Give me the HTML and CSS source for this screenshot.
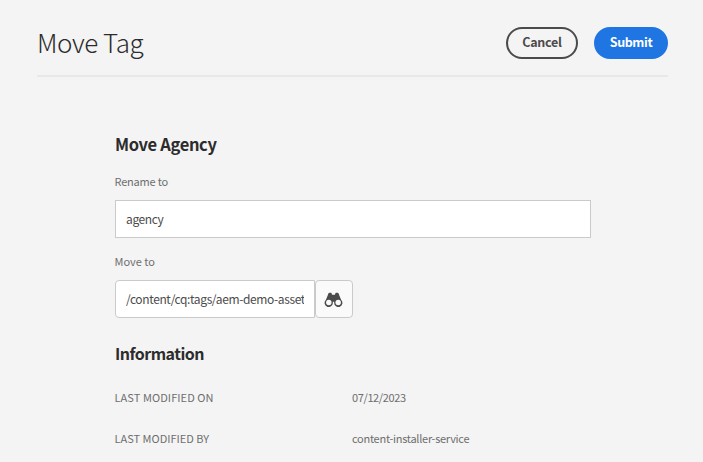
FILE: index.html
```html
<!DOCTYPE html>
<html lang="en">
<head>
<meta charset="utf-8">
<title>Move Tag</title>
<link rel="stylesheet" href="styles.css">
</head>
<body>
<header class="header">
  <h1 class="title"><span>Move Tag</span></h1>
  <div class="actions">
    <button class="btn btn-cancel" type="button"><span>Cancel</span></button>
    <button class="btn btn-submit" type="button"><span>Submit</span></button>
  </div>
</header>
<main class="content">
  <h2 class="heading heading-move"><span>Move Agency</span></h2>
  <div class="label label-rename"><span>Rename to</span></div>
  <div class="input"><span class="value value-name">agency</span></div>
  <div class="label label-move"><span>Move to</span></div>
  <div class="picker">
    <div class="input input-path"><span class="value value-path">/content/cq:tags/aem-demo-asset</span></div>
    <button class="browse" type="button" aria-label="Browse">
      <svg width="19" height="15" viewBox="0 0 20 16">
        <path fill="#4b4b4b" d="M4 3.200C4.300 1.600 5 .8 5.700 .8h1.400c.6 0 .9.4 1.100 1.300L8.500 3h3l.3-.9c.2-.9.5-1.300 1.100-1.300h1.400c.7 0 1.400.8 1.700 2.400L18.200 8.500a4.400 4.400 0 1 1-7.500 3.200V10.500H9.300v1.200A4.400 4.400 0 1 1 1.800 8.500z"/>
        <circle cx="5" cy="11.200" r="2.900" fill="#fafafa"/>
        <circle cx="15" cy="11.200" r="2.900" fill="#fafafa"/>
      </svg>
    </button>
  </div>
  <h2 class="heading heading-info"><span>Information</span></h2>
  <div class="info">
    <span class="k-on">LAST MODIFIED ON</span><span class="v-date">07/12/2023</span>
    <span class="k-by">LAST MODIFIED BY</span><span class="v-user">content-installer-service</span>
  </div>
</main>
</body>
</html>
```
FILE: styles.css
```css
* { box-sizing: border-box; }
body {
  margin: 0;
  height: 462px;
  overflow: hidden;
  background: #f4f4f4;
  color: #4b4b4b;
  font-family: "Noto Sans CJK SC", "Noto Sans", sans-serif;
}
.header {
  display: flex;
  justify-content: space-between;
  margin: 0 35px 0 37px;
  height: 77px;
  padding-top: 27px;
  border-bottom: 2px solid #e8e8e8;
}
.title {
  margin: 0;
  font-size: 26px;
  font-weight: 300;
  line-height: 30px;
  letter-spacing: -0.45px;
  color: #2c2c2c;
}
.actions { display: flex; gap: 16px; }
.btn {
  height: 32px;
  padding: 0 0 2px;
  border-radius: 16px;
  font: 700 12.5px/26px "Noto Sans CJK SC", sans-serif;
  letter-spacing: -0.25px;
  white-space: nowrap;
}
.btn-cancel {
  width: 72px;
  border: 2px solid #4b4b4b;
  background: transparent;
  color: #4b4b4b;
}
.btn-submit {
  width: 74px;
  border: 2px solid #1f76e3;
  background: #1f76e3;
  color: #fff;
  letter-spacing: -0.4px;
}
.content {
  width: 476px;
  margin: 55px 0 0 115px;
}
.heading {
  margin: 0;
  font-size: 16.5px;
  font-weight: 700;
  line-height: 24px;
  letter-spacing: -0.35px;
  color: #2c2c2c;
}
.label {
  height: 20px;
  margin: 15px 0 9px -0.5px;
  font-size: 11px;
  line-height: 20px;
  letter-spacing: -0.2px;
  color: #6e6e6e;
}
.input {
  display: flex;
  align-items: center;
  height: 38px;
  padding: 0 10px;
  border: 1px solid #cacaca;
  background: #fff;
  font-size: 12px;
  line-height: 20px;
  letter-spacing: -0.38px;
}
.label-move {
  margin-top: 13px;
  letter-spacing: 0;
}
.picker { display: flex; }
.input-path {
  width: 200px;
  border-radius: 4px 0 0 4px;
}
.value { overflow: hidden; white-space: nowrap; }
.browse {
  display: flex;
  align-items: center;
  justify-content: center;
  width: 38px;
  height: 38px;
  padding: 0 1px 0 0;
  border: 1px solid #cacaca;
  border-radius: 4px;
  background: #fafafa;
}
.heading-info {
  margin-top: 23px;
  font-size: 16px;
  letter-spacing: -0.52px;
}
.info {
  display: grid;
  grid-template-columns: 237.5px 1fr;
  row-gap: 21px;
  margin: 22px 0 0 -0.5px;
  font-size: 11px;
  line-height: 20px;
  color: #6e6e6e;
}
.k-on { letter-spacing: 0.08px; }
.v-date { letter-spacing: -0.38px; }
.v-user { letter-spacing: -0.27px; }
```
